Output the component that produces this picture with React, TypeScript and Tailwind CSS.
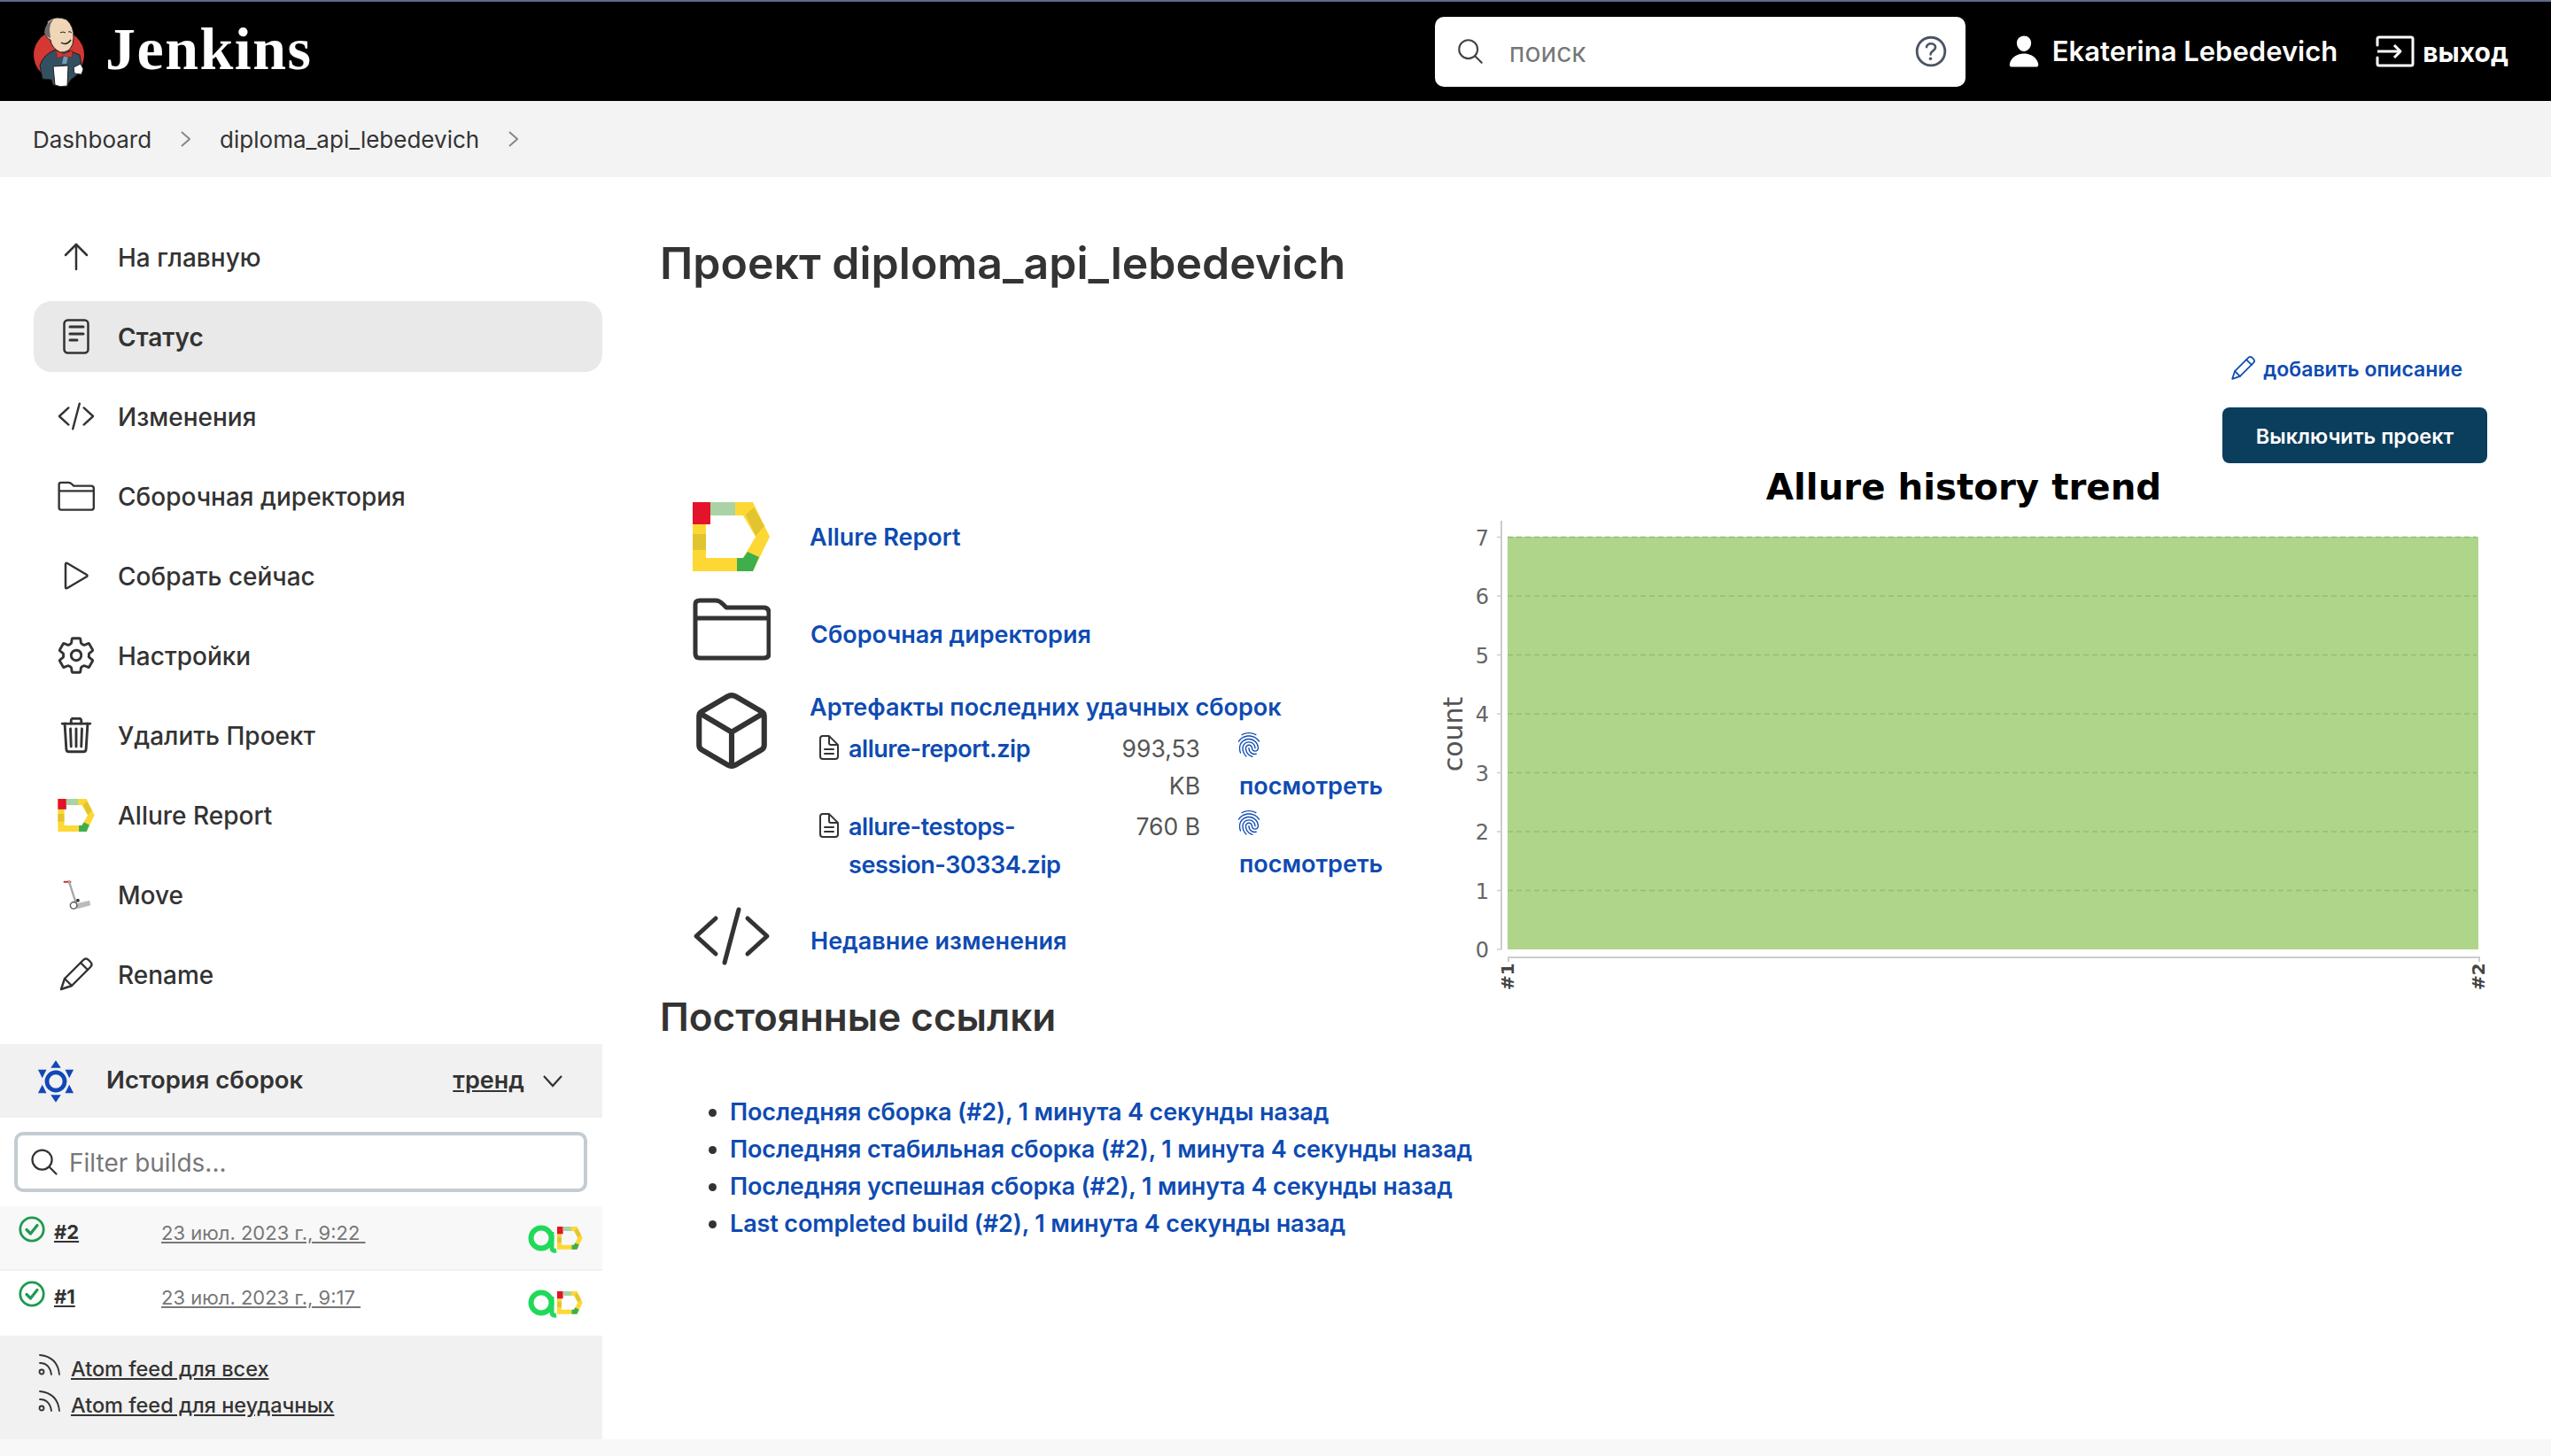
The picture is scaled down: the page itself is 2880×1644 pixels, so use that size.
import {
  IoCubeOutline,
  IoDocumentTextOutline,
  IoFingerPrintOutline,
  IoHelpCircleOutline,
  IoPerson,
  IoSearchOutline,
  IoSettingsOutline,
  IoTrashOutline,
} from "react-icons/io5";

const sans = "font-['Inter','Liberation_Sans',sans-serif]";

function AllureMark() {
  return (
    <>
      <path fillRule="evenodd" fill="#fdd835" d="M0 0H68L87 39L68 78H0ZM15 15V63H57L71 39L57 15Z" />
      <rect x="0" y="0" width="20" height="25" fill="#e4122a" />
      <rect x="20" y="0" width="28" height="15" fill="#a9d3a4" />
      <rect x="0" y="36" width="15" height="18" fill="#e2c430" />
      <path d="M60 14L69 6L81 27L71 38Z" fill="#e2c430" />
      <path d="M50 63H57L62 56L75 62L68 78H50Z" fill="#3fae4d" />
    </>
  );
}

function AllureLogo({ className }: { className?: string }) {
  return (
    <svg viewBox="0 0 87 78" className={className}>
      <AllureMark />
    </svg>
  );
}

function CodeIcon({ className }: { className?: string }) {
  return (
    <svg viewBox="0 0 44 32" className={className} fill="none" stroke="currentColor" strokeWidth="2.5" strokeLinecap="round" strokeLinejoin="round">
      <path d="M13 6L2 16L13 26" />
      <path d="M31 6L42 16L31 26" />
      <path d="M26 1L18 31" />
    </svg>
  );
}

function FolderIcon({ className }: { className?: string }) {
  return (
    <svg viewBox="0 0 44 36" className={className} fill="none" stroke="currentColor" strokeWidth="2.5" strokeLinejoin="round">
      <path d="M4 2H13Q15 2 17 4L19 6H40Q43 6 43 9V32Q43 34.500 40 34.500H4Q1.500 34.500 1.500 32V4Q1.500 2 4 2Z" />
      <path d="M1.500 12H43" />
    </svg>
  );
}

function ArrowUpIcon() {
  return (
    <svg viewBox="0 0 28 32" className="w-[28px] h-[32px]" fill="none" stroke="currentColor" strokeWidth="2.5" strokeLinecap="round" strokeLinejoin="round">
      <path d="M14 30V2" />
      <path d="M2 14L14 2L26 14" />
    </svg>
  );
}

function StatusIcon() {
  return (
    <svg viewBox="0 0 30 40" className="w-[30px] h-[40px]" fill="none" stroke="currentColor" strokeWidth="2.5" strokeLinecap="round">
      <rect x="1.500" y="1.500" width="27" height="37" rx="4" />
      <path d="M8 9H23M8 17H23M8 24H16" strokeWidth="3" />
    </svg>
  );
}

function PlayIcon() {
  return (
    <svg viewBox="0 0 28 32" className="w-[28px] h-[32px]" fill="none" stroke="currentColor" strokeWidth="2.5" strokeLinejoin="round">
      <path d="M2 3Q2 1 4 2L26 15Q27 16 26 17L4 30Q2 31 2 29Z" />
    </svg>
  );
}

function PencilIcon({ className }: { className?: string }) {
  return (
    <svg viewBox="0 0 40 40" className={className} fill="none" stroke="currentColor" strokeWidth="2.4" strokeLinejoin="round" strokeLinecap="round">
      <path d="M3 37L7 25L28 4Q31 1 34 4L36 6Q39 9 36 12L15 33Z" />
      <path d="M7 25L15 33" />
      <path d="M25 7L33 15" />
    </svg>
  );
}

function Chevron() {
  return (
    <svg viewBox="0 0 11 18" className="w-[11px] h-[18px] shrink-0" fill="none" stroke="#888" strokeWidth="2">
      <path d="M1 1L10 9L1 17" />
    </svg>
  );
}

function CheckIcon() {
  return (
    <svg viewBox="0 0 30 30" className="w-[30px] h-[30px] shrink-0" fill="none" stroke="#1e9a50">
      <circle cx="15" cy="15" r="13.200" strokeWidth="2.800" />
      <path d="M9 15.500L13.500 20L21 10.500" strokeWidth="3.200" strokeLinecap="round" strokeLinejoin="round" />
    </svg>
  );
}

function MoveIcon() {
  return (
    <svg viewBox="0 0 40 40" className="w-[38px] h-[40px]">
      <path d="M5 5H14" stroke="#c62828" strokeWidth="2" />
      <path d="M11 3L20 31" stroke="#a8a8a8" strokeWidth="2.500" />
      <path d="M19 31L36 27L37 33L21 37Z" fill="#b9bdb9" />
      <circle cx="17" cy="33" r="4" fill="#fff" stroke="#555" strokeWidth="1.500" />
      <circle cx="22" cy="27" r="2" fill="#333" />
    </svg>
  );
}

function RssIcon() {
  return (
    <svg viewBox="0 0 26 26" className="w-[26px] h-[26px] shrink-0" fill="none" stroke="#333" strokeWidth="1.800" strokeLinecap="round">
      <circle cx="4" cy="21" r="2.500" />
      <path d="M2 11Q13 11 15 24" />
      <path d="M2 2Q22 4 24 24" />
    </svg>
  );
}

function BuildHistoryIcon() {
  return (
    <svg viewBox="0 0 44 52" className="w-[42px] h-[50px]" fill="#1148b8">
      <circle cx="22" cy="26" r="10.500" fill="none" stroke="#1148b8" strokeWidth="5" />
      <path d="M22 1L28 10H16Z" />
      <path d="M22 51L16 42H28Z" />
      <path d="M1 12H11L6 22Z" />
      <path d="M43 12H33L38 22Z" />
      <path d="M1 40L6 30L11 40Z" />
      <path d="M43 40L38 30L33 40Z" />
    </svg>
  );
}

function ExitIcon() {
  return (
    <svg viewBox="0 0 44 36" className="w-[44px] h-[36px]" fill="none" stroke="#fff" strokeWidth="3">
      <path d="M2 11V4Q2 2 4 2H40Q42 2 42 4V32Q42 34 40 34H4Q2 34 2 32V25" strokeLinecap="round" />
      <path d="M2 18H26" />
      <path d="M21 11L28 18L21 25" strokeLinejoin="round" />
    </svg>
  );
}

function JenkinsLogo() {
  return (
    <svg viewBox="0 0 80 100" className="w-[80px] h-[100px] shrink-0 mt-[4px]">
      <ellipse cx="36.500" cy="52" rx="28.500" ry="28" fill="#d33833" />
      <path d="M15 64Q19 51 33 46L50 48L60 52L63 70L50 80L46 86L30 86L28 80L18 79Z" fill="#335061" stroke="#1c1c1c" strokeWidth="1" />
      <path d="M24 14Q33 7 45 12Q54 20 53 33L52 40Q48 50 38 49Q28 44 27 35Q20 33 22 24Z" fill="#f0d6b7" stroke="#231f20" strokeWidth="1" />
      <path d="M20 27Q20 17 32 10Q26 16 26 24L27 33Q22 32 20 27Z" fill="#6d6b6d" />
      <path d="M42 53L47 53L45 62L40 62Z" fill="#6d9eb5" />
      <path d="M33 47L42 51L52 47L51 55L42 53L35 56Z" fill="#d33833" stroke="#7c1f1c" strokeWidth="0.700" />
      <path d="M30 65L47 64L46 87Q38 89 32 86Z" fill="#fff" stroke="#231f20" strokeWidth="1" />
      <path d="M53 66L61 62L64 68L62 74L54 73Z" fill="#fff" stroke="#231f20" strokeWidth="1" />
      <path d="M38 27Q41 25 44 27M47 26Q49 25 51 27" fill="none" stroke="#231f20" strokeWidth="1" />
      <path d="M39 38Q45 42 50 35" fill="none" stroke="#231f20" strokeWidth="1.500" />
    </svg>
  );
}

function AllureBadge() {
  return (
    <svg viewBox="0 0 62 34" className="w-[62px] h-[34px]">
      <circle cx="15" cy="17" r="11.500" fill="none" stroke="#20d95a" strokeWidth="6" />
      <path d="M27 10V28Q27 32 32 31" fill="none" stroke="#20d95a" strokeWidth="5" />
      <g transform="translate(33 4) scale(0.33)">
        <AllureMark />
      </g>
    </svg>
  );
}

function TrendChart() {
  const ticks = [0, 1, 2, 3, 4, 5, 6, 7];
  const tickY = (n: number) => 1072 - n * 66.5;
  return (
    <svg viewBox="1600 523 1230 600" className="w-[1230px] h-[600px] shrink-0">
      <text x="2217" y="564" textAnchor="middle" fontFamily="DejaVu Sans" fontWeight="700" fontSize="40.300" fill="#000">
        Allure history trend
      </text>
      <rect x="1702" y="606" width="1096" height="466" fill="#afd58a" />
      {ticks.map((n) => (
        <g key={n}>
          {n > 0 && <line x1="1702" x2="2796" y1={tickY(n)} y2={tickY(n)} stroke="#94bd78" strokeWidth="1.500" strokeDasharray="6 4" />}
          <line x1="1690" x2="1695" y1={tickY(n)} y2={tickY(n)} stroke="#ccc" strokeWidth="1.500" />
          <text x="1681" y={tickY(n) + 9} textAnchor="end" fontFamily="DejaVu Sans" fontSize="24" fill="#666">
            {n}
          </text>
        </g>
      ))}
      <line x1="1695" x2="1695" y1="588" y2="1072" stroke="#ccc" strokeWidth="2" />
      <path d="M1703 1086V1081H2799V1086" fill="none" stroke="#ccc" strokeWidth="2" />
      <text transform="translate(1651 829) rotate(-90)" textAnchor="middle" fontFamily="DejaVu Sans" fontSize="30" fill="#555">
        count
      </text>
      <text transform="translate(1709 1118) rotate(-90)" fontFamily="DejaVu Sans" fontWeight="700" fontSize="20" fill="#444">
        #1
      </text>
      <text transform="translate(2805 1118) rotate(-90)" fontFamily="DejaVu Sans" fontWeight="700" fontSize="20" fill="#444">
        #2
      </text>
    </svg>
  );
}

const navItems = [
  { label: "На главную", icon: <ArrowUpIcon /> },
  { label: "Статус", icon: <StatusIcon />, active: true },
  { label: "Изменения", icon: <CodeIcon className="w-[42px] h-[32px]" /> },
  { label: "Сборочная директория", icon: <FolderIcon className="w-[42px] h-[34px]" /> },
  { label: "Собрать сейчас", icon: <PlayIcon /> },
  { label: "Настройки", icon: <IoSettingsOutline className="w-[46px] h-[46px]" /> },
  { label: "Удалить Проект", icon: <IoTrashOutline className="w-[46px] h-[46px]" /> },
  { label: "Allure Report", icon: <AllureLogo className="w-[42px] h-[37px]" /> },
  { label: "Move", icon: <MoveIcon /> },
  { label: "Rename", icon: <PencilIcon className="w-[40px] h-[40px]" /> },
];

const builds = [
  { num: "#2", date: "23 июл. 2023 г., 9:22", rowClass: "bg-[#f8f8f8] border-b-2 border-[#f1f1f1]" },
  { num: "#1", date: "23 июл. 2023 г., 9:17", rowClass: "bg-white" },
];

const permalinks = [
  "Последняя сборка (#2), 1 минута 4 секунды назад",
  "Последняя стабильная сборка (#2), 1 минута 4 секунды назад",
  "Последняя успешная сборка (#2), 1 минута 4 секунды назад",
  "Last completed build (#2), 1 минута 4 секунды назад",
];

const artifacts = [
  { name: "allure-report.zip", size: "993,53 KB" },
  { name: "allure-testops-session-30334.zip", size: "760 B" },
];

function Sidebar() {
  return (
    <aside className="w-[680px] shrink-0 flex flex-col pt-[50px]">
      <nav className="ml-[38px] flex flex-col gap-[10px]">
        {navItems.map((item) => (
          <div
            key={item.label}
            className={`h-[80px] rounded-[20px] flex items-center text-[28px] text-[#333] ${item.active ? "bg-[#e9e9e9] font-semibold" : "font-medium"}`}
          >
            <span className="w-[95px] shrink-0 flex justify-center">{item.icon}</span>
            <span className="mt-[2px]">{item.label}</span>
          </div>
        ))}
      </nav>

      <div className="mt-[39px] h-[84px] bg-[#f1f1f1] flex items-center pl-[42px] pr-[45px] text-[#333]">
        <BuildHistoryIcon />
        <span className="ml-[36px] -mt-[3px] text-[27.5px] font-semibold">История сборок</span>
        <span className="ml-auto text-[27px] underline font-semibold">тренд</span>
        <svg viewBox="0 0 22 14" className="ml-[21px] w-[22px] h-[14px]" fill="none" stroke="#333" strokeWidth="2.200">
          <path d="M1 1L11 12L21 1" />
        </svg>
      </div>

      <div className="mx-[16px] mt-[16px] h-[68px] w-[647px] rounded-[10px] border-4 border-[#c3ccd1] bg-white flex items-center pl-[12px] text-[28px] text-[#777]">
        <IoSearchOutline className="w-[36px] h-[36px] text-[#333]" />
        <span className="ml-[10px] mt-[2px]">Filter builds...</span>
      </div>

      <div className="mt-[16px]">
        {builds.map((b) => (
          <div key={b.num} className={`h-[73px] flex items-start pl-[21px] pr-[22px] pt-[11px] ${b.rowClass}`}>
            <CheckIcon />
            <span className="ml-[10px] mt-[2px] w-[121px] text-[22px] font-bold underline text-[#333]">{b.num}</span>
            <span className="mt-[3px] text-[22px] text-[#777] underline whitespace-pre">{b.date + " "}</span>
            <span className="ml-auto mt-[8px]">
              <AllureBadge />
            </span>
          </div>
        ))}
      </div>

      <div className="h-[118px] bg-[#f1f1f1] pl-[43px] pt-[20px] flex flex-col gap-[15px] text-[23.5px] font-medium text-[#333]">
        <div className="h-[26px] flex items-center">
          <RssIcon />
          <span className="ml-[11px] mt-[10px] underline">Atom feed для всех</span>
        </div>
        <div className="h-[26px] flex items-center">
          <RssIcon />
          <span className="ml-[11px] mt-[10px] underline">Atom feed для неудачных</span>
        </div>
      </div>
    </aside>
  );
}

function ProjectLinks() {
  const link = "text-[27px] font-semibold text-[#0e4bb2]";
  return (
    <div className="w-[855px] shrink-0 pl-[37px] pt-[44px] flex flex-col">
      <div className="h-[78px] flex items-center gap-[45px]">
        <AllureLogo className="w-[87px] h-[78px] shrink-0" />
        <span className={`${link} pt-[2px]`}>Allure Report</span>
      </div>
      <div className="mt-[29px] h-[72px] flex items-center gap-[45px]">
        <FolderIcon className="w-[88px] h-[72px] shrink-0 text-[#333]" />
        <span className={`${link} pt-[14px]`}>Сборочная директория</span>
      </div>
      <div className="mt-[32px] flex gap-[45px]">
        <span className="w-[87px] shrink-0 flex justify-center text-[#333]">
          <IoCubeOutline className="w-[98px] h-[98px] shrink-0 -mt-[2px]" />
        </span>
        <div className="flex flex-col">
          <span className={`${link} leading-[42px]`}>Артефакты последних удачных сборок</span>
          <div className="mt-[4px] flex flex-col gap-[3px] pl-[6px]">
            {artifacts.map((a) => (
              <div key={a.name} className="flex leading-[42px]">
                <IoDocumentTextOutline className="w-[32px] h-[32px] mt-[4px] mr-[6px] shrink-0 text-[#333]" />
                <span className={`${link} leading-[43px] tracking-[-0.45px] w-[270px] shrink-0`}>{a.name}</span>
                <span className="w-[127px] shrink-0 pl-[37px] text-right text-[26.5px] text-[#555]">{a.size}</span>
                <div className="ml-[40px] flex flex-col">
                  <IoFingerPrintOutline className="w-[30px] h-[34px] text-[#0e4bb2]" />
                  <span className={`${link} ml-[4px] leading-[42px] mt-[9px]`}>посмотреть</span>
                </div>
              </div>
            ))}
          </div>
        </div>
      </div>
      <div className="mt-[26px] h-[66px] flex items-center gap-[45px]">
        <CodeIcon className="w-[88px] h-[66px] shrink-0 text-[#333]" />
        <span className={`${link} pt-[13px]`}>Недавние изменения</span>
      </div>
    </div>
  );
}

export default function App() {
  return (
    <div className={`w-[2880px] h-[1644px] overflow-hidden bg-white flex flex-col ${sans}`}>
      <header className="h-[114px] shrink-0 border-t-2 border-[#5d6a8f] bg-black flex items-center pl-[30px] pr-[48px] text-white">
        <JenkinsLogo />
        <span className="ml-[9px] -mt-[6px] font-['Liberation_Serif',serif] font-bold text-[68px] leading-none tracking-[1.500px]">Jenkins</span>
        <div className="ml-auto w-[599px] h-[79px] rounded-[10px] bg-white flex items-center pl-[23px] pr-[16px] text-[30px] text-[#777]">
          <IoSearchOutline className="w-[34px] h-[34px] text-[#444]" />
          <span className="ml-[27px] mt-[2px]">поиск</span>
          <IoHelpCircleOutline className="ml-auto w-[46px] h-[46px] text-[#4b5563]" />
        </div>
        <IoPerson className="ml-[46px] w-[40px] h-[40px]" />
        <span className="ml-[12px] text-[31px] font-semibold">Ekaterina Lebedevich</span>
        <span className="ml-[43px]">
          <ExitIcon />
        </span>
        <span className="ml-[9px] mt-[2px] text-[30px] font-bold">выход</span>
      </header>

      <div className="h-[86px] shrink-0 bg-[#f3f3f3] flex items-center pl-[37px] text-[26px] text-[#333]">
        <span>Dashboard</span>
        <span className="ml-[33px]">
          <Chevron />
        </span>
        <span className="ml-[33px]">diploma_api_lebedevich</span>
        <span className="ml-[33px]">
          <Chevron />
        </span>
      </div>

      <div className="flex-1 flex min-h-0">
        <Sidebar />
        <main className="flex-1 pl-[65px] pt-[66px] text-[#333]">
          <h1 className="text-[50px] leading-[62px] font-semibold">Проект diploma_api_lebedevich</h1>
          <div className="mt-[70px] pr-[72px] flex flex-col items-end">
            <div className="mr-[28px] h-[36px] flex items-center text-[23px] font-semibold text-[#0e4bb2]">
              <PencilIcon className="w-[29px] h-[29px] mr-[8px] -mt-[2px]" />
              <span className="mt-[3px]">добавить описание</span>
            </div>
            <div className="mt-[26px] w-[299px] h-[63px] pt-[2px] rounded-[8px] bg-[#0b3d5c] text-white text-[23.5px] font-semibold flex items-center justify-center">
              Выключить проект
            </div>
          </div>
          <div className="flex">
            <ProjectLinks />
            <TrendChart />
          </div>
          <h2 className="text-[44px] leading-[50px] font-semibold">Постоянные ссылки</h2>
          <ul className="mt-[62px] pl-[79px] list-disc">
            {permalinks.map((p) => (
              <li key={p} className="leading-[42px] text-[27px]">
                <span className="font-semibold tracking-[-0.12px] text-[#0e4bb2]">{p}</span>
              </li>
            ))}
          </ul>
        </main>
      </div>

      <div className="h-[19px] shrink-0 bg-[#f8f8f8]" />
    </div>
  );
}
